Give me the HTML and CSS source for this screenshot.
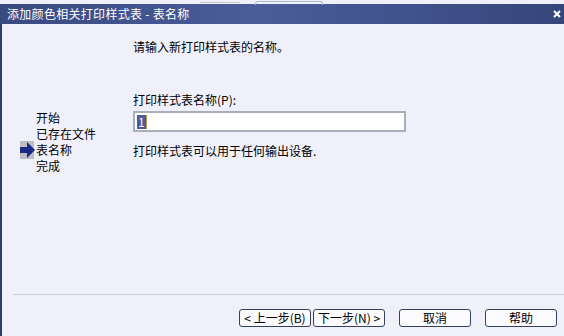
FILE: index.html
```html
<!DOCTYPE html>
<html lang="zh-CN">
<head>
  <meta charset="UTF-8">
  <title>添加颜色相关打印样式表 - 表名称</title>
  <link rel="stylesheet" href="styles.css">
</head>
<body>

  <div class="behind">
    <span class="behind-line"></span>
    <span class="behind-tab"></span>
  </div>

  <div class="titlebar">
    <span class="title">添加颜色相关打印样式表 - 表名称</span>
    <svg class="close" width="8" height="8" viewBox="0 0 8 8" aria-label="关闭">
      <path d="M1 1 L7 7 M7 1 L1 7" stroke="#fff" stroke-width="2"/>
    </svg>
  </div>

  <div class="frame">
    <div class="main">
      <ul class="steps">
        <li><span class="mark"></span>开始</li>
        <li><span class="mark"></span>已存在文件</li>
        <li class="current">
          <span class="mark">
            <svg width="15" height="18" viewBox="0 0 15 18">
              <rect x="0" y="0" width="14" height="18" fill="#bdbdc6"/>
              <path d="M0 6 H7 V1 L15 9 L7 17 V12 H0 Z" fill="#1a2a86"/>
            </svg>
          </span>表名称
        </li>
        <li><span class="mark"></span>完成</li>
      </ul>

      <div class="content">
        <div class="lead">请输入新打印样式表的名称。</div>
        <label class="field-label" for="tableName">打印样式表名称(P):</label>
        <div class="field" id="tableName"><span class="sel">1</span><span class="caret"></span></div>
        <div class="note">打印样式表可以用于任何输出设备.</div>
      </div>
    </div>

    <div class="sep"></div>

    <div class="buttons">
      <div class="pair">
        <button class="btn">&lt; 上一步(B)</button>
        <button class="btn">下一步(N) &gt;</button>
      </div>
      <button class="btn">取消</button>
      <button class="btn">帮助</button>
    </div>
  </div>

</body>
</html>
```

FILE: styles.css
```css
body {
  margin: 0;
  width: 564px;
  height: 336px;
  overflow: hidden;
  background: #f0f0fb;
  font-family: "Noto Sans CJK SC", "Noto Sans", sans-serif;
  font-size: 12px;
  line-height: 16px;
  color: #000;
}

/* window behind the dialog */
.behind {
  height: 4px;
  display: flex;
  align-items: flex-start;
  padding-left: 200px;
  gap: 15px;
}

.behind-line {
  width: 40px;
  height: 1px;
  margin-top: 2px;
  background: #c4c8d4;
}

.behind-tab {
  width: 66px;
  height: 3px;
  margin-top: 1px;
  border: 1px solid #a8bcd8;
  border-bottom: none;
  border-radius: 3px 3px 0 0;
}

.titlebar {
  height: 20px;
  display: flex;
  align-items: center;
  justify-content: space-between;
  padding: 0 3px 0 7px;
  background: linear-gradient(to right, #394a80, #4a5d9a 45%, #3e4f88 80%, #374679);
  color: #fff;
}

.title {
  font-size: 12px;
  letter-spacing: 0.3px;
}

.frame {
  height: 312px;
  border-left: 2px solid #2e3b6c;
  display: flex;
  flex-direction: column;
}

.main {
  height: 270px;
  display: flex;
}

.steps {
  list-style: none;
  margin: 0;
  flex: none;
  width: 131px;
  padding: 86px 0 0 18px;
  box-sizing: border-box;
}

.steps li {
  display: flex;
  align-items: center;
  height: 16px;
  white-space: nowrap;
}

.mark {
  width: 16px;
  flex: none;
  display: flex;
  align-items: center;
}

.content {
  padding-top: 15px;
}

.lead {
  margin-bottom: 37px;
}

.field-label {
  display: block;
}

.field {
  margin-top: 3px;
  width: 267px;
  height: 17px;
  border: 2px solid #a8afbb;
  background: #fff;
  display: flex;
  align-items: center;
  padding-left: 2px;
}

.sel {
  background: #4a5a9c;
  color: #fff;
  line-height: 14px;
  padding: 0 1px;
}

.caret {
  width: 1px;
  height: 14px;
  background: #b89a3c;
}

.note {
  margin-top: 11px;
}

.sep {
  height: 1px;
  margin-left: 11px;
  background: #c8cfda;
}

.buttons {
  display: flex;
  justify-content: flex-end;
  gap: 14px;
  padding: 14px 7px 0 0;
}

.pair {
  display: flex;
  gap: 2px;
}

.btn {
  width: 72px;
  height: 18px;
  padding: 0;
  border: 1px solid #33405f;
  border-radius: 3px;
  background: #fbfbfd;
  font-family: inherit;
  font-size: 12px;
  line-height: 16px;
  color: #000;
}
```
